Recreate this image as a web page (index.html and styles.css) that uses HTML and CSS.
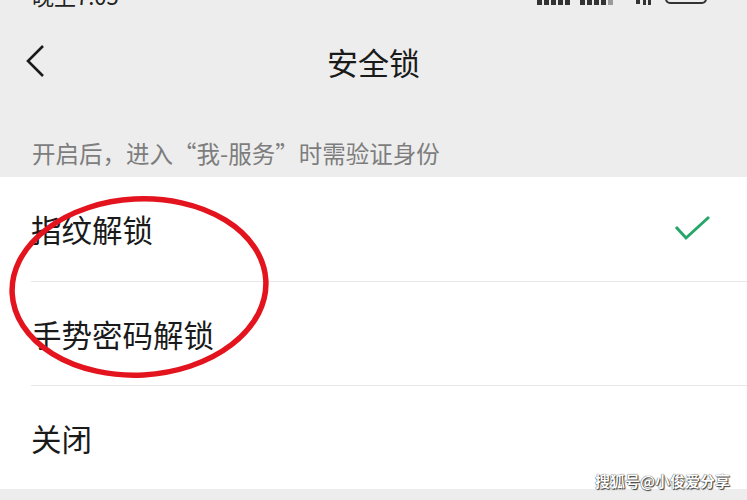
FILE: index.html
```html
<!DOCTYPE html>
<html lang="zh-CN">
<head>
    <meta charset="UTF-8">
    <meta name="viewport" content="width=device-width, initial-scale=1.0">
    <title>安全锁</title>
    <link rel="stylesheet" href="styles.css">
</head>
<body>
    <div class="phone">
        <div class="status-bar">
            <span class="status-time">晚上7:05</span>
            <svg class="status-icons" width="172" height="28" viewBox="0 0 172 28">
                <g fill="#333">
                    <rect x="0" y="10" width="5" height="14"/>
                    <rect x="7" y="10" width="5" height="14"/>
                    <rect x="14" y="10" width="5" height="14"/>
                    <rect x="21" y="10" width="5" height="14"/>
                    <rect x="28" y="10" width="5" height="14"/>
                    <rect x="43" y="10" width="5" height="14"/>
                    <rect x="50" y="10" width="5" height="14"/>
                    <rect x="57" y="10" width="5" height="14"/>
                    <rect x="64" y="10" width="5" height="14"/>
                    <rect x="71" y="10" width="5" height="14" fill="#9a9a9a"/>
                    <rect x="99" y="12" width="4" height="11"/>
                    <rect x="106" y="10" width="3" height="14"/>
                    <rect x="111" y="15" width="3" height="9"/>
                </g>
                <rect x="129" y="4" width="40" height="18" rx="4" fill="none" stroke="#333" stroke-width="2"/>
            </svg>
        </div>

        <div class="nav-bar">
            <svg class="back-icon" width="24" height="36" viewBox="0 0 24 36">
                <path d="M19 3 L4 18 L19 33" fill="none" stroke="#1a1a1a" stroke-width="2.6"/>
            </svg>
            <h1 class="nav-title">安全锁</h1>
            <span></span>
        </div>

        <p class="section-tip">开启后，进入“我-服务”时需验证身份</p>

        <ul class="option-list">
            <li class="option-item">
                <span>指纹解锁</span>
                <svg class="check-icon" width="38" height="28" viewBox="0 0 38 28">
                    <path d="M2 12 L12 23 L35 2" fill="none" stroke="#27a66a" stroke-width="3"/>
                </svg>
            </li>
            <li class="option-item">
                <span>手势密码解锁</span>
            </li>
            <li class="option-item">
                <span>关闭</span>
            </li>
        </ul>

        <svg class="mark-circle" width="747" height="500" viewBox="0 0 747 500">
            <ellipse cx="139" cy="287" rx="127" ry="88" fill="none" stroke="#e3141d" stroke-width="5.5" transform="rotate(-3 139 287)"/>
        </svg>

        <div class="watermark">搜狐号@小俊爱分享</div>
    </div>
</body>
</html>
```

FILE: styles.css
```css
* {
    margin: 0;
    padding: 0;
    box-sizing: border-box;
}

body {
    background: #ededed;
    font-family: "Noto Sans CJK SC", "Noto Sans", sans-serif;
    color: #1a1a1a;
    overflow: hidden;
}

.phone {
    width: 747px;
    height: 500px;
    position: relative;
    overflow: hidden;
}

.status-bar {
    height: 28px;
    margin-top: -19px;
    padding: 0 38px 0 32px;
    display: flex;
    justify-content: space-between;
    align-items: center;
}

.status-time {
    font-size: 22px;
    line-height: 28px;
    color: #222;
}

.status-icons {
    display: block;
}

.nav-bar {
    height: 104px;
    display: grid;
    grid-template-columns: 1fr auto 1fr;
    align-items: center;
    padding: 0 24px;
}

.back-icon {
    display: block;
}

.nav-title {
    font-size: 31px;
    font-weight: 400;
    line-height: 1;
}

.section-tip {
    padding: 24px 32px 8px;
    font-size: 23.5px;
    line-height: 32px;
    color: #7d7d7d;
}

.option-list {
    list-style: none;
    background: #fff;
}

.option-item {
    height: 104px;
    margin-left: 31px;
    padding-right: 35px;
    display: flex;
    align-items: center;
    justify-content: space-between;
    font-size: 30.5px;
}

.option-item + .option-item {
    border-top: 1px solid #e8e8e8;
}

.check-icon {
    display: block;
}

.mark-circle {
    position: absolute;
    left: 0;
    top: 0;
    pointer-events: none;
}

.watermark {
    position: absolute;
    right: 17px;
    bottom: 9px;
    font-size: 15px;
    font-weight: 700;
    color: #fff;
    text-shadow: 0 0 1px #000, 1px 1px 1px #444;
}
```
